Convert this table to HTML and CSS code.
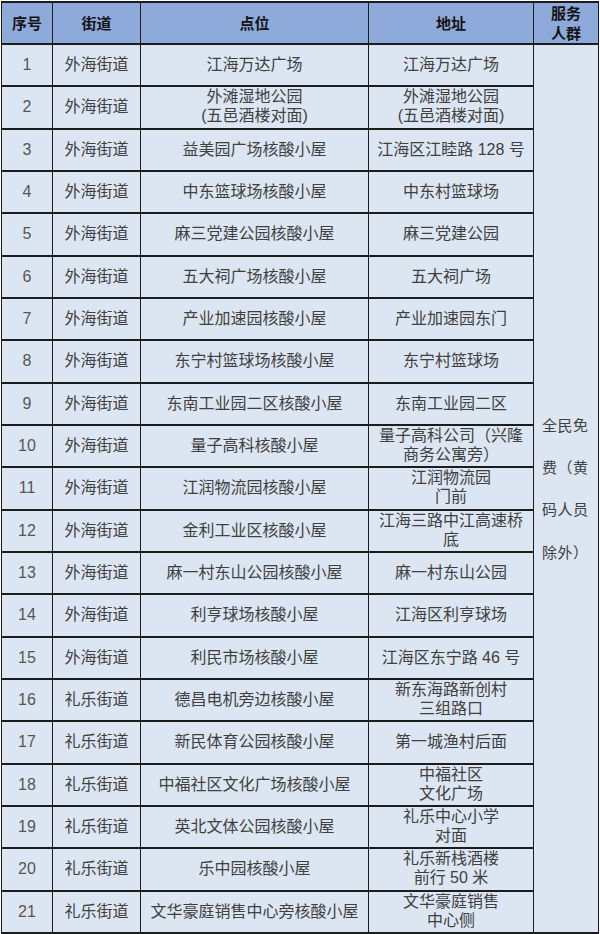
FILE: index.html
```html
<!DOCTYPE html>
<html lang="zh-CN">
<head>
<meta charset="utf-8">
<title>核酸采样点位表</title>
<link rel="stylesheet" href="styles.css">
</head>
<body>
<table class="sites">
  <colgroup>
    <col class="c-no">
    <col class="c-street">
    <col class="c-point">
    <col class="c-addr">
    <col class="c-group">
  </colgroup>
  <thead>
    <tr class="head">
      <th>序号</th>
      <th>街道</th>
      <th>点位</th>
      <th>地址</th>
      <th>服务<br>人群</th>
    </tr>
  </thead>
  <tbody>
    <tr><td class="no">1</td><td>外海街道</td><td>江海万达广场</td><td>江海万达广场</td>
      <td class="group" rowspan="21"><div class="group-text"><span class="gl">全民免</span><span class="gl">费（黄</span><span class="gl">码人员</span><span class="gl">除外）</span></div></td></tr>
    <tr><td class="no">2</td><td>外海街道</td><td class="two">外滩湿地公园<br>(五邑酒楼对面)</td><td class="two">外滩湿地公园<br>(五邑酒楼对面)</td></tr>
    <tr><td class="no">3</td><td>外海街道</td><td>益美园广场核酸小屋</td><td>江海区江睦路 128 号</td></tr>
    <tr><td class="no">4</td><td>外海街道</td><td>中东篮球场核酸小屋</td><td>中东村篮球场</td></tr>
    <tr><td class="no">5</td><td>外海街道</td><td>麻三党建公园核酸小屋</td><td>麻三党建公园</td></tr>
    <tr><td class="no">6</td><td>外海街道</td><td>五大祠广场核酸小屋</td><td>五大祠广场</td></tr>
    <tr><td class="no">7</td><td>外海街道</td><td>产业加速园核酸小屋</td><td>产业加速园东门</td></tr>
    <tr><td class="no">8</td><td>外海街道</td><td>东宁村篮球场核酸小屋</td><td>东宁村篮球场</td></tr>
    <tr><td class="no">9</td><td>外海街道</td><td>东南工业园二区核酸小屋</td><td>东南工业园二区</td></tr>
    <tr><td class="no">10</td><td>外海街道</td><td>量子高科核酸小屋</td><td class="two">量子高科公司（兴隆<br>商务公寓旁）</td></tr>
    <tr><td class="no">11</td><td>外海街道</td><td>江润物流园核酸小屋</td><td class="two">江润物流园<br>门前</td></tr>
    <tr><td class="no">12</td><td>外海街道</td><td>金利工业区核酸小屋</td><td class="two">江海三路中江高速桥<br>底</td></tr>
    <tr><td class="no">13</td><td>外海街道</td><td>麻一村东山公园核酸小屋</td><td>麻一村东山公园</td></tr>
    <tr><td class="no">14</td><td>外海街道</td><td>利亨球场核酸小屋</td><td>江海区利亨球场</td></tr>
    <tr><td class="no">15</td><td>外海街道</td><td>利民市场核酸小屋</td><td>江海区东宁路 46 号</td></tr>
    <tr><td class="no">16</td><td>礼乐街道</td><td>德昌电机旁边核酸小屋</td><td class="two">新东海路新创村<br>三组路口</td></tr>
    <tr><td class="no">17</td><td>礼乐街道</td><td>新民体育公园核酸小屋</td><td>第一城渔村后面</td></tr>
    <tr><td class="no">18</td><td>礼乐街道</td><td>中福社区文化广场核酸小屋</td><td class="two">中福社区<br>文化广场</td></tr>
    <tr><td class="no">19</td><td>礼乐街道</td><td>英北文体公园核酸小屋</td><td class="two">礼乐中心小学<br>对面</td></tr>
    <tr><td class="no">20</td><td>礼乐街道</td><td>乐中园核酸小屋</td><td class="two">礼乐新栈酒楼<br>前行 50 米</td></tr>
    <tr><td class="no">21</td><td>礼乐街道</td><td>文华豪庭销售中心旁核酸小屋</td><td class="two">文华豪庭销售<br>中心侧</td></tr>
  </tbody>
</table>
</body>
</html>
```

FILE: styles.css
```css
html, body {
  margin: 0;
  padding: 0;
  background: #ffffff;
}

body {
  padding: 1px 0 0 1px;
}

.sites {
  border-collapse: collapse;
  table-layout: fixed;
  width: 597px;
  font-family: "Liberation Sans", "Noto Sans CJK SC", sans-serif;
  font-size: 16px;
  color: #404040;
  border: 1px solid #1c1c1c;
}

.c-no { width: 51px; }
.c-street { width: 88px; }
.c-point { width: 228px; }
.c-addr { width: 165px; }
.c-group { width: 65px; }

.sites th,
.sites td {
  border-left: 1px solid #1c1c1c;
  border-right: 1px solid #1c1c1c;
  border-top: 2px solid #1c1c1c;
  border-bottom: 2px solid #1c1c1c;
  padding: 0;
  text-align: center;
  vertical-align: middle;
  background: #dce6f2;
  white-space: nowrap;
}

.head {
  height: 42px;
}

.sites th {
  background: #8eaadb;
  color: #141414;
  font-family: "Noto Sans CJK SC", sans-serif;
  font-weight: 700;
  font-size: 15px;
  line-height: 20px;
}

.sites tbody tr {
  height: 42.33px;
}

.sites td {
  line-height: 20px;
}

.sites td.no {
  font-size: 16px;
  color: #555555;
}

.sites td.two {
  line-height: 19px;
  padding-bottom: 2px;
}

.group-text {
  display: flex;
  flex-direction: column;
  align-items: flex-start;
  width: 48px;
  margin: 0 auto;
  font-family: "Noto Sans CJK SC", sans-serif;
  font-size: 15px;
  line-height: 42.3px;
}

.gl {
  display: block;
  letter-spacing: 0.5px;
}
```
